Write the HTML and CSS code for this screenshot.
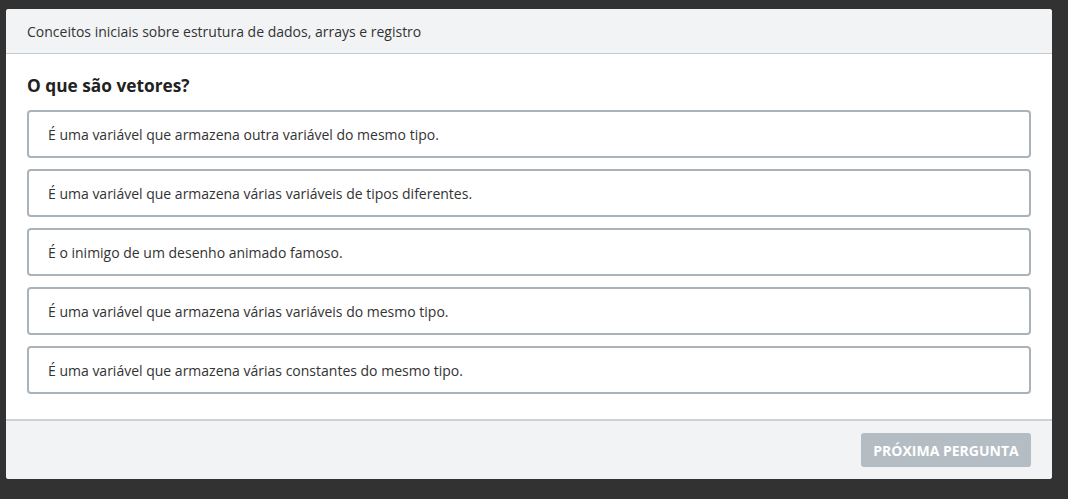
FILE: index.html
```html
<!DOCTYPE html>
<html lang="pt">
<head>
<meta charset="utf-8">
<link rel="stylesheet" href="styles.css">
</head>
<body>
<div class="card">
  <div class="card-header">Conceitos iniciais sobre estrutura de dados, arrays e registro</div>
  <div class="card-body">
    <h2 class="question">O que são vetores?</h2>
    <div class="options">
      <div class="option">É uma variável que armazena outra variável do mesmo tipo.</div>
      <div class="option">É uma variável que armazena várias variáveis de tipos diferentes.</div>
      <div class="option">É o inimigo de um desenho animado famoso.</div>
      <div class="option">É uma variável que armazena várias variáveis do mesmo tipo.</div>
      <div class="option">É uma variável que armazena várias constantes do mesmo tipo.</div>
    </div>
  </div>
  <div class="card-footer">
    <button class="btn-next" disabled>Próxima pergunta</button>
  </div>
</div>
</body>
</html>
```
FILE: styles.css
```css
html, body {
  margin: 0;
  padding: 0;
  background: #323232;
  height: 100%;
}
body {
  font-family: "Open Sans", "Noto Sans", sans-serif;
  color: #333;
  padding: 9px 0 0 6px;
  box-sizing: border-box;
}
.card {
  width: 1046px;
  height: 470px;
  background: #fff;
  border-radius: 3px;
  display: flex;
  flex-direction: column;
  overflow: hidden;
}
.card-header {
  height: 45px;
  flex: none;
  box-sizing: border-box;
  background: #f2f3f5;
  border-bottom: 1px solid #c4cad0;
  display: flex;
  align-items: center;
  padding-left: 21px;
  font-size: 14px;
  color: #333;
}
.card-body {
  flex: 1;
  padding: 20px 21px 0 21px;
}
.question {
  margin: 0 0 12px 0;
  font-size: 17.3px;
  line-height: 24px;
  font-weight: 700;
  color: #222;
}
.options {
  display: flex;
  flex-direction: column;
  gap: 11px;
}
.option {
  height: 48px;
  box-sizing: border-box;
  border: 2px solid #aab2ba;
  border-radius: 4px;
  display: flex;
  align-items: center;
  padding-left: 19px;
  font-size: 14px;
  color: #333;
}
.card-footer {
  flex: none;
  height: 60px;
  box-sizing: border-box;
  background: #f2f3f5;
  border-top: 2px solid #cdd1d5;
  display: flex;
  justify-content: flex-end;
  align-items: flex-start;
  padding: 12px 21px 0 0;
}
.btn-next {
  width: 170px;
  height: 34px;
  border: none;
  border-radius: 3px;
  background: #b4bcc4;
  color: #fff;
  font-family: "Open Sans", "Noto Sans", sans-serif;
  font-weight: 700;
  font-size: 14px;
  text-transform: uppercase;
  padding: 0;
}
```
